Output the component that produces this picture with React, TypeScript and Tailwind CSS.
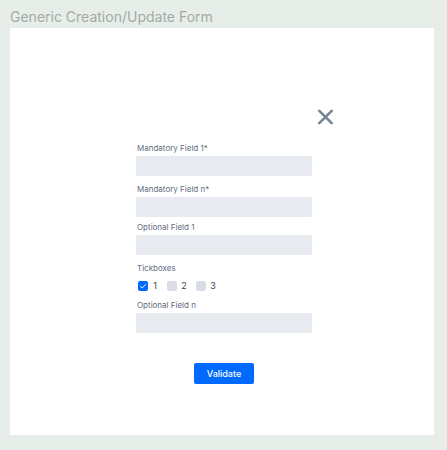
import { useId, type ReactNode } from "react";

function Label({ htmlFor, children }: { htmlFor: string; children: ReactNode }) {
  return (
    <label htmlFor={htmlFor} className="px-px text-[8px] leading-3 text-[#5f6b7c]">
      {children}
    </label>
  );
}

function TextField({ label, required = false }: { label: string; required?: boolean }) {
  const id = useId();
  return (
    <div className="flex flex-col gap-0.5">
      <Label htmlFor={id}>{label}</Label>
      <input
        id={id}
        type="text"
        required={required}
        className="h-5 w-full rounded-xs bg-[#e7eaef] px-2 text-[9px] text-[#3c4654] outline-none focus:ring-1 focus:ring-[#006aff]"
      />
    </div>
  );
}

function Tickbox({ label, defaultChecked = false }: { label: string; defaultChecked?: boolean }) {
  return (
    <label className="flex items-center gap-[3px] text-[9px] leading-3 text-[#3c4350]">
      <span className="grid size-2.5">
        <input
          type="checkbox"
          defaultChecked={defaultChecked}
          className="peer col-start-1 row-start-1 size-2.5 appearance-none rounded-xs bg-[#dadde5] checked:bg-[#006aff]"
        />
        <svg
          viewBox="0 0 10 10"
          aria-hidden="true"
          className="pointer-events-none invisible col-start-1 row-start-1 size-2.5 peer-checked:visible"
        >
          <path
            d="M2.4 5.2 4.2 7 7.7 3.4"
            fill="none"
            stroke="white"
            strokeWidth="0.9"
            strokeLinecap="round"
            strokeLinejoin="round"
          />
        </svg>
      </span>
      <span className="w-2 text-center">{label}</span>
    </label>
  );
}

export default function App() {
  return (
    <div className="flex min-h-screen flex-col bg-[#e7eee9] pr-[13px] pb-[15px] pl-[10px] font-['Inter',sans-serif]">
      <h1 className="pt-[7px] pb-px text-[14px] leading-5 text-[#a3aaa5]">Generic Creation/Update Form</h1>
      <main className="flex flex-1 justify-center bg-white pt-[78px] pb-12 pl-1">
        <form className="flex w-44 flex-col" onSubmit={(event) => event.preventDefault()}>
          <button
            type="button"
            aria-label="Close"
            className="-mr-6 mb-3.5 flex size-[22px] items-center justify-center self-end"
          >
            <svg viewBox="0 0 16 16" aria-hidden="true" className="size-4">
              <path d="M2.3 1.8 14.7 14.2M14.7 1.8 2.3 14.2" stroke="#778492" strokeWidth="2.6" strokeLinecap="round" />
            </svg>
          </button>
          <div className="flex flex-col gap-[7px]">
            <TextField label="Mandatory Field 1*" required />
            <div className="flex flex-col gap-1">
              <TextField label="Mandatory Field n*" required />
              <TextField label="Optional Field 1" />
            </div>
            <fieldset className="flex flex-col">
              <legend className="mb-1.5 px-px text-[8px] leading-3 text-[#5f6b7c]">Tickboxes</legend>
              <div className="flex gap-2 px-0.5">
                <Tickbox label="1" defaultChecked />
                <Tickbox label="2" />
                <Tickbox label="3" />
              </div>
            </fieldset>
            <TextField label="Optional Field n" />
          </div>
          <button
            type="submit"
            className="mt-[30px] h-[21px] w-[60px] self-center rounded-xs bg-[#006aff] text-[9px] leading-3 font-medium text-white"
          >
            Validate
          </button>
        </form>
      </main>
    </div>
  );
}
